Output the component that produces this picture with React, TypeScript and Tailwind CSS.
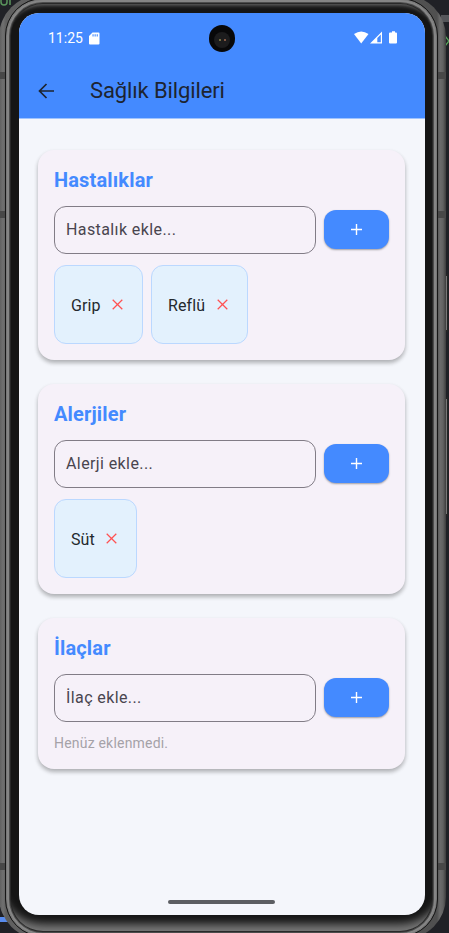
import React from "react";

function AddIcon() {
  return (
    <svg width="11" height="11" viewBox="0 0 11 11" stroke="white" strokeWidth="1.4" fill="none">
      <path d="M5.5 0v11M0 5.5h11" />
    </svg>
  );
}

function Chip({ label, width }: { label: string; width: string }) {
  return (
    <div className={`flex h-[79px] items-center justify-between rounded-xl border border-[#bbd8ff] bg-[#e3f1fd] pr-[19px] pl-4 ${width}`}>
      <span className="pt-[2px] text-[16px] tracking-[0.1px] text-[#24292e]">{label}</span>
      <svg width="11" height="11" viewBox="0 0 11 11" stroke="#ff5252" strokeWidth="1.25" fill="none">
        <path d="M.7 .7l9.6 9.6M10.3 .7L.7 10.3" />
      </svg>
    </div>
  );
}

function Section({ title, hint, height, children }: { title: string; hint: string; height: string; children: React.ReactNode }) {
  return (
    <section className={`rounded-2xl bg-[#f6f1f9] px-4 pt-[17px] shadow-[0_3px_4px_rgba(0,0,0,0.24),0_2px_5px_rgba(0,0,0,0.07)] ${height}`}>
      <h2 className="h-[27px] text-[20px] leading-[26px] font-bold tracking-[0.15px] text-[#448aff]">{title}</h2>
      <div className="mt-3 flex items-center gap-2">
        <div className="flex h-12 w-[262px] items-center rounded-xl border border-[#817c86] pl-[11px] text-[16px] tracking-[0.4px] text-[#49454f]">
          {hint}
        </div>
        <button className="mb-px flex h-[39px] w-[65px] items-center justify-center rounded-xl bg-[#448aff] shadow-[0_1px_2px_rgba(0,0,0,0.35)]">
          <AddIcon />
        </button>
      </div>
      {children}
    </section>
  );
}

function StatusBar() {
  return (
    <div className="relative flex h-[50px] items-center pl-[29px] text-white">
      <span className="w-[37px] text-[14px] leading-none">11:25</span>
      <svg className="ml-[4px]" width="11" height="13" viewBox="0 0 11 13">
        <path fillRule="evenodd" fill="white" d="M3.5 .5H9.5Q10.5 .5 10.5 1.5V11.5Q10.5 12.5 9.5 12.5H1Q0 12.5 0 11.5V4ZM3.5 2.2V4.5H4.6V2.2ZM5.6 2.2V4.5H6.7V2.2ZM7.7 2.2V4.5H8.8V2.2Z" />
      </svg>
      <div className="absolute top-[12px] left-[190px] flex h-[27px] w-[26px] items-center justify-center rounded-full bg-[#080809]">
        <div className="mt-[2px] flex h-4 w-4 items-center justify-center gap-[3px] rounded-full bg-[#1c1c1d]">
          <i className="h-[2px] w-[2px] rounded-full bg-[#8b854c]" />
          <i className="h-[2px] w-[2px] rounded-full bg-[#a46a50]" />
        </div>
      </div>
      <svg className="-mt-px mr-[27px] ml-auto" width="44" height="13" viewBox="0 0 44 13" fill="white">
        <path d="M0 3Q7.2-2 14.5 3L7.2 12.5Z" />
        <path fillRule="evenodd" d="M16 12.5L28 .5V12.5ZM23.3 11.3H26.8V3.6L23.3 7Z" />
        <path d="M36 1.5H38V.3H41V1.5H42Q43 1.5 43 2.5V11.5Q43 12.5 42 12.5H36Q35 12.5 35 11.5V2.5Q35 1.5 36 1.5Z" />
      </svg>
    </div>
  );
}

export default function App() {
  return (
    <div className="relative h-[933px] w-[449px] overflow-hidden bg-[#202126] font-['Roboto','Noto_Sans',sans-serif]">
      <svg className="absolute top-0 left-0" width="14" height="6" viewBox="0 0 14 6" fill="none" stroke="#59945c" strokeWidth="1.5"><path d="M1 0v2q0 3 3 3t3-3V0M10 5V0" /></svg>
      <div className="absolute top-[15px] right-0 h-[7px] w-[8px] bg-[#55565a]" />
      <svg className="absolute top-[34px] right-0" width="4" height="14" viewBox="0 0 4 14" fill="none" stroke="#59a45c" strokeWidth="1.4"><path d="M0 2l4 5-4 5" /></svg>
      <div className="absolute top-[917px] left-0 h-[5px] w-2 bg-[#588cf0]" />
      <div className="absolute top-[274px] left-[444px] h-[58px] w-[4px] border-r border-y-2 border-[#242424] bg-[#777]" />
      <div className="absolute top-[397px] left-[444px] h-[119px] w-[4px] border-r border-y-2 border-[#242424] bg-[#777]" />

      <div className="relative -mt-[5px] -ml-px h-[944px] w-[447px] rounded-[42px] bg-[linear-gradient(90deg,#5c5c5c_0,#707070_4px,#606060_7px,#505050_438px,#6c6c6c_441px,#626262_444px,#3c3c3c_447px)] pt-[3px] pl-[6px]">
        <div className="absolute top-[77px] left-0 h-[7px] w-full bg-[#484848]" />
        <div className="absolute top-[216px] left-0 h-[7px] w-full bg-[#484848]" />
        <div className="absolute top-[868px] left-0 h-[7px] w-full bg-[#484848]" />
        <div className="relative h-[939px] w-[433px] rounded-[38px] border border-[#171717] bg-[#151515] px-[13px] pt-[14px] shadow-[inset_0_0_0_1px_#777,inset_0_0_0_3px_#858585,inset_0_0_0_4px_#4c4c4c,inset_0_0_0_5px_#292929,inset_0_10px_4px_-4px_#747474,inset_0_-18px_8px_-6px_#777]">
          <div className="relative h-[902px] w-[406px] overflow-hidden rounded-[20px] bg-[#f4f6fb]">
            <header className="h-[106px] border-b border-[#9fc4ff] bg-[#448aff]">
              <StatusBar />
              <div className="flex h-[55px] items-center">
                <svg className="ml-[19px]" width="17" height="16" viewBox="0 0 17 16" fill="none" stroke="#1d2430" strokeWidth="1.7">
                  <path d="M16 8H2M8.5 1L1.5 8l7 7" />
                </svg>
                <h1 className="ml-[35px] text-[22px] font-normal tracking-[-0.12px] text-[#1d2430]">Sağlık Bilgileri</h1>
              </div>
            </header>
            <main className="flex flex-col gap-[24px] pt-[31px] pr-[20px] pl-[19px]">
              <Section title="Hastalıklar" hint="Hastalık ekle..." height="h-[210px]">
                <div className="mt-[11px] flex gap-2"><Chip label="Grip" width="w-[89px]" /><Chip label="Reflü" width="w-[97px]" /></div>
              </Section>
              <Section title="Alerjiler" hint="Alerji ekle..." height="h-[210px]">
                <div className="mt-[11px] flex"><Chip label="Süt" width="w-[83px]" /></div>
              </Section>
              <Section title="İlaçlar" hint="İlaç ekle..." height="h-[151px]">
                <p className="mt-[11px] text-[14px] leading-5 tracking-[0.2px] text-[#a5a2a8]">Henüz eklenmedi.</p>
              </Section>
            </main>
            <div className="absolute bottom-[11px] left-[149px] h-[4px] w-[107px] rounded-full bg-[#5c5e62]" />
          </div>
        </div>
      </div>
    </div>
  );
}
